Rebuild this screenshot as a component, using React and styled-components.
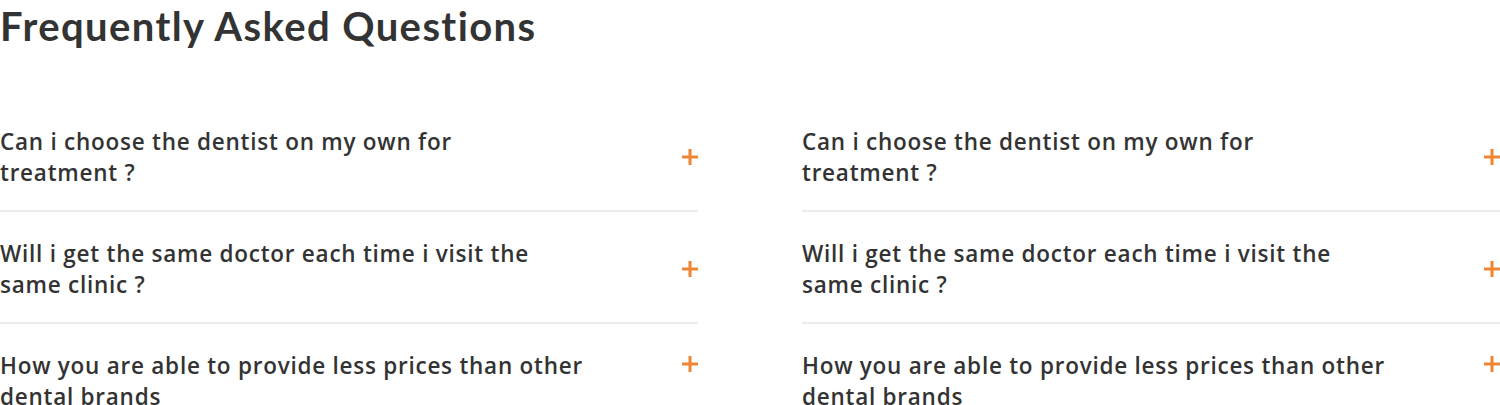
import React from "react";
import styled, { createGlobalStyle } from "styled-components";

const GlobalStyle = createGlobalStyle`
  body {
    margin: 0;
    background: #fff;
  }
`;

const Page = styled.section`
  width: 1500px;
  font-family: "Open Sans", "Liberation Sans", sans-serif;
  color: #333;
`;

const Title = styled.h2`
  margin: 0 0 48px;
  font-family: Lato, "Open Sans", sans-serif;
  font-weight: 700;
  font-size: 40px;
  line-height: 52px;
  color: #333;
  letter-spacing: 1.4px;
`;

const Columns = styled.div`
  display: grid;
  grid-template-columns: 1fr 1fr;
  column-gap: 104px;
`;

const List = styled.div`
  display: flex;
  flex-direction: column;
`;

const Row = styled.div`
  display: flex;
  align-items: center;
  justify-content: space-between;
  padding: 26px 0 22px;
  border-bottom: ${(p) => (p.$last ? "none" : "2px solid #ebebeb")};
`;

const Question = styled.p`
  margin: 0;
  font-size: 22.5px;
  font-weight: 600;
  line-height: 31px;
  letter-spacing: 0.75px;
`;

const Toggle = styled.button`
  flex: none;
  display: flex;
  align-self: ${(p) => (p.$top ? "flex-start" : "center")};
  margin-top: ${(p) => (p.$top ? "6px" : "0")};
  padding: 0;
  border: 0;
  background: none;
  cursor: pointer;
`;

const questions = [
  ["Can i choose the dentist on my own for", "treatment ?"],
  ["Will i get the same doctor each time i visit the", "same clinic ?"],
  ["How you are able to provide less prices than other", "dental brands"],
];

function Plus() {
  return (
    <svg width="16" height="16" viewBox="0 0 16 16">
      <path d="M8 0v16M0 8h16" stroke="#ef8532" strokeWidth="3" />
    </svg>
  );
}

function FaqList() {
  return (
    <List>
      {questions.map((lines, i) => {
        const last = i === questions.length - 1;
        return (
          <Row key={i} $last={last}>
            <Question>
              {lines[0]}
              <br />
              {lines[1]}
            </Question>
            <Toggle aria-label="Expand" $top={last}>
              <Plus />
            </Toggle>
          </Row>
        );
      })}
    </List>
  );
}

export default function App() {
  return (
    <Page>
      <GlobalStyle />
      <Title>Frequently Asked Questions</Title>
      <Columns>
        <FaqList />
        <FaqList />
      </Columns>
    </Page>
  );
}
